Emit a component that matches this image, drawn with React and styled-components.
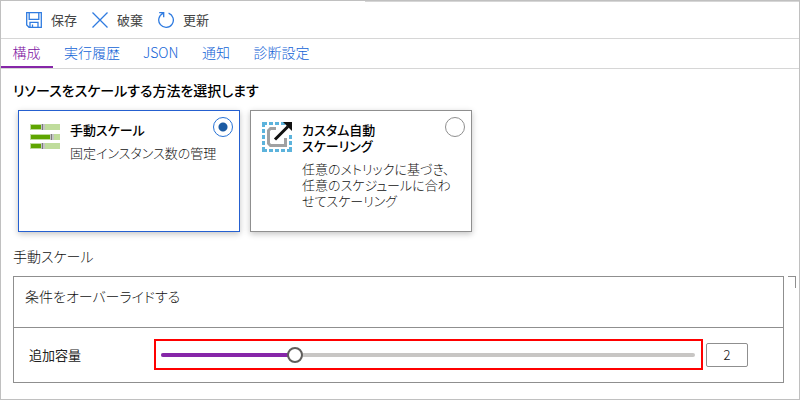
import React, { useState } from "react";
import styled, { createGlobalStyle } from "styled-components";

const GlobalStyle = createGlobalStyle`
  *, *::before, *::after { box-sizing: border-box; }
  body {
    margin: 0;
    background: #fff;
    color: #111;
    font-family: "Noto Sans CJK JP", "Noto Sans", sans-serif;
    font-feature-settings: "palt";
    font-size: 13px;
    font-weight: 300;
    line-height: 16px;
  }
  button, input { font: inherit; font-feature-settings: inherit; color: inherit; }
`;

const Page = styled.div`
  min-height: 100vh;
  border: 1px solid #c0c0c0;
  background: #fff;
`;

const Toolbar = styled.div`
  display: flex;
  flex-direction: column;
  height: 38px;
  border-bottom: 1px solid #d6d6d6;
`;

const TopEdge = styled.div`
  height: 1px;
  margin-left: 364px;
  background: #d6d6d6;
`;

const Commands = styled.div`
  display: flex;
  flex: 1;
  align-items: center;
  gap: 15px;
  padding: 0 25px;
`;

const Command = styled.button`
  display: flex;
  align-items: center;
  gap: 9px;
  padding: 0;
  border: 0;
  background: none;
  color: #444;
  font-weight: 400;
  cursor: pointer;
`;

const ToolIcon = styled.svg`
  width: 16px;
  height: 16px;
  fill: none;
  stroke: #2f7be0;
  stroke-width: 1.3;
`;

const TabList = styled.div`
  display: flex;
  height: 30px;
  border-bottom: 1px solid #d6d6d6;
`;

const Tab = styled.button`
  min-width: 52px;
  height: 29px;
  padding: 0 12px 2px 11px;
  border: 0;
  border-bottom: 2px solid ${(p) => (p.$active ? "#8626a8" : "transparent")};
  background: none;
  color: ${(p) => (p.$active ? "#7a0fa0" : "#1263d6")};
  font-size: 14px;
  cursor: pointer;
`;

const Content = styled.main`
  padding: 11px 3px 16px 12px;
`;

const Heading = styled.h2`
  margin: 0;
  color: #000;
  font-size: 14px;
  font-weight: 500;
  line-height: 20px;
`;

const Tiles = styled.div`
  display: flex;
  flex-wrap: wrap;
  gap: 10px;
  padding: 10px 5px 0;
`;

const Tile = styled.label`
  display: grid;
  grid-template-columns: 30px 1fr 20px;
  grid-template-rows: auto 1fr;
  column-gap: 10px;
  row-gap: 7px;
  width: 222px;
  min-height: 122px;
  padding: 6px 6px 6px 11px;
  border: 1px solid ${(p) => (p.$selected ? "#2560d0" : "#8f8f8f")};
  background: #fff;
  box-shadow: 0 2px 6px rgba(0, 0, 0, 0.24);
  cursor: pointer;
`;

const TileIcon = styled.svg`
  grid-row: 1 / 3;
  width: 30px;
  height: 30px;
  margin-top: 5px;
`;

const TileTitle = styled.span`
  padding-top: 5px;
  color: #000;
  font-weight: 500;
`;

const TileText = styled.span`
  grid-column: 2 / 4;
  white-space: nowrap;
`;

const Radio = styled.input`
  appearance: none;
  width: 20px;
  height: 20px;
  margin: 0;
  border: 1px solid #8f8f8f;
  border-radius: 50%;
  background: #fff;
  &:checked {
    border-color: #2672d6;
    background: radial-gradient(circle, #1c5ba3 4px, #fff 5px);
  }
`;

const SectionLabel = styled.h3`
  margin: 0;
  padding: 14px 0 10px;
  font-size: 14px;
  font-weight: 300;
  line-height: 20px;
`;

const PanelRow = styled.div`
  display: flex;
  align-items: flex-start;
  gap: 4px;
`;

const Panel = styled.section`
  flex: 1;
  min-width: 0;
  border: 1px solid #8f8f8f;
`;

const Corner = styled.div`
  width: 8px;
  height: 12px;
  border: solid #8f8f8f;
  border-width: 1px 1px 0 0;
`;

const Condition = styled.div`
  padding: 9px 11px 21px;
  border-bottom: 1px solid #8f8f8f;
  font-size: 14px;
  line-height: 20px;
`;

const Capacity = styled.div`
  display: flex;
  align-items: center;
  gap: 3px;
  height: 54px;
  padding: 0 35px 1px 15px;
`;

const CapacityLabel = styled.label`
  width: 122px;
  color: #222;
  font-weight: 400;
`;

const Highlight = styled.div`
  display: grid;
  flex: 1;
  align-items: center;
  height: 31px;
  padding: 0 6px 0 5px;
  border: 2px solid #f00;
`;

const Rail = styled.div`
  grid-area: 1 / 1;
  height: 4px;
  border-radius: 2px;
  background: #c8c6c4;
`;

const RailFill = styled.div`
  height: 100%;
  border-radius: 2px;
  background: #8626a8;
`;

const Slider = styled.input`
  grid-area: 1 / 1;
  appearance: none;
  width: calc(100% + 16px);
  height: 16px;
  margin: 0 -8px;
  background: transparent;
  &::-webkit-slider-thumb {
    appearance: none;
    width: 16px;
    height: 16px;
    border: 2px solid #605e5c;
    border-radius: 50%;
    background: #fff;
  }
`;

const Count = styled.input`
  width: 42px;
  height: 24px;
  padding: 0;
  border: 1px solid #8f8f8f;
  border-radius: 2px;
  background: #fff;
  text-align: center;
`;

const SaveIcon = () => (
  <ToolIcon viewBox="0 0 16 16" aria-hidden="true">
    <path d="M.7.7h14.6v14.6H3L.7 13zM3.2.7v6.6h9.6V.7M4 15.3v-5h8v5M6.5 15.3v-2.8" />
  </ToolIcon>
);

const DiscardIcon = () => (
  <ToolIcon viewBox="0 0 16 16" aria-hidden="true">
    <path d="M.5.5l15 15M15.5.5l-15 15" />
  </ToolIcon>
);

const RefreshIcon = () => (
  <ToolIcon viewBox="0 0 16 16" aria-hidden="true">
    <path d="M10.6 1.2A7.3 7.3 0 1 1 5 1.4M1.2.7h4.5v4.6" />
  </ToolIcon>
);

const ManualIcon = () => (
  <TileIcon viewBox="0 0 30 30" aria-hidden="true">
    {[[2, 12], [12, 21], [21, 12]].map(([y, x]) => (
      <g key={y}>
        <path fill="#bfdc9c" d={`M0 ${y}h30v6H0z`} />
        <path fill="#5ea500" d={`M1 ${y + 1}h${x - 1}v4H1z`} />
        <path fill="#c4c4c4" d={`M${x - 1} ${y}h4v6h-4z`} />
        <path fill="#7a7a7a" d={`M${x} ${y}h1v6h-1z`} />
      </g>
    ))}
  </TileIcon>
);

const CustomIcon = () => (
  <TileIcon viewBox="0 0 30 30" aria-hidden="true">
    <path
      fill="none"
      stroke="#5cb3dc"
      strokeWidth="3"
      d="M0 1.5h5M7 1.5h4M13 1.5h4M19 1.5h4M1.5 0v5M1.5 7v4M1.5 13v4M1.5 19v4M1.5 25v5M0 28.5h5M7 28.5h4M13 28.5h4M19 28.5h4M25 28.5h5M28.5 30v-5M28.5 23v-4M28.5 17v-4"
    />
    <path fill="none" stroke="#a0a1a2" strokeWidth="3" d="M14 6.5H8.5l-2 2v13l2 2h15V16" />
    <path stroke="#111" strokeWidth="3" d="M13 17.5l13-13" />
    <path fill="#111" d="M21 0h9v9z" />
  </TileIcon>
);

const commands = [
  ["保存", SaveIcon],
  ["破棄", DiscardIcon],
  ["更新", RefreshIcon],
];
const tabs = ["構成", "実行履歴", "JSON", "通知", "診断設定"];
const MIN = 1;
const MAX = 5;

export default function App() {
  const [tab, setTab] = useState(tabs[0]);
  const [mode, setMode] = useState("manual");
  const [count, setCount] = useState(2);
  const fill = ((count - MIN) / (MAX - MIN)) * 100;

  return (
    <Page>
      <GlobalStyle />
      <Toolbar>
        <TopEdge />
        <Commands>
          {commands.map(([name, Icon]) => (
            <Command key={name} type="button">
              <Icon />
              {name}
            </Command>
          ))}
        </Commands>
      </Toolbar>
      <TabList role="tablist">
        {tabs.map((name) => (
          <Tab
            key={name}
            type="button"
            role="tab"
            aria-selected={tab === name}
            $active={tab === name}
            onClick={() => setTab(name)}
          >
            {name}
          </Tab>
        ))}
      </TabList>
      <Content>
        <Heading>リソースをスケールする方法を選択します</Heading>
        <Tiles>
          <Tile $selected={mode === "manual"}>
            <ManualIcon />
            <TileTitle>手動スケール</TileTitle>
            <Radio type="radio" name="mode" checked={mode === "manual"} onChange={() => setMode("manual")} />
            <TileText>固定インスタンス数の管理</TileText>
          </Tile>
          <Tile $selected={mode === "custom"}>
            <CustomIcon />
            <TileTitle>
              カスタム自動
              <br />
              スケーリング
            </TileTitle>
            <Radio type="radio" name="mode" checked={mode === "custom"} onChange={() => setMode("custom")} />
            <TileText>
              任意のメトリックに基づき、
              <br />
              任意のスケジュールに合わ
              <br />
              せてスケーリング
            </TileText>
          </Tile>
        </Tiles>
        <SectionLabel>手動スケール</SectionLabel>
        <PanelRow>
          <Panel>
            <Condition>条件をオーバーライドする</Condition>
            <Capacity>
              <CapacityLabel htmlFor="capacity">追加容量</CapacityLabel>
              <Highlight>
                <Rail>
                  <RailFill style={{ width: `${fill}%` }} />
                </Rail>
                <Slider
                  id="capacity"
                  type="range"
                  min={MIN}
                  max={MAX}
                  value={count}
                  onChange={(e) => setCount(Number(e.target.value))}
                />
              </Highlight>
              <Count
                type="text"
                aria-label="追加容量"
                value={count}
                onChange={(e) => setCount(Math.min(MAX, Math.max(MIN, Number(e.target.value) || MIN)))}
              />
            </Capacity>
          </Panel>
          <Corner />
        </PanelRow>
      </Content>
    </Page>
  );
}
